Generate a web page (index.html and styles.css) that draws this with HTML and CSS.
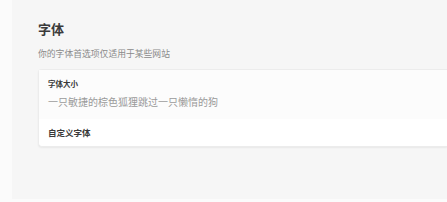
FILE: index.html
```html
<!DOCTYPE html>
<html lang="zh-CN">
<head>
    <meta charset="UTF-8">
    <title>字体</title>
    <link rel="stylesheet" href="styles.css">
</head>
<body>
    <div class="panel">
        <h2 class="section-title">字体</h2>
        <p class="section-desc">你的字体首选项仅适用于某些网站</p>

        <div class="card">
            <div class="row row-hover">
                <div class="row-label">字体大小</div>
                <div class="row-sample">一只敏捷的棕色狐狸跳过一只懒惰的狗</div>
            </div>
            <div class="row">
                <div class="row-label row-label-wide">自定义字体</div>
            </div>
        </div>
    </div>
</body>
</html>
```
FILE: styles.css
```css
* {
    margin: 0;
    padding: 0;
    box-sizing: border-box;
}

body {
    font-family: "Noto Sans CJK SC", "Noto Sans", sans-serif;
    background: #fbfbfb;
    color: #333;
    overflow: hidden;
}

.panel {
    margin-left: 12px;
    height: 199px;
    background: #f6f6f6;
    padding: 20px 0 0 26px;
}

.section-title {
    font-size: 13px;
    line-height: 17px;
    font-weight: 700;
    color: #3a3a3a;
}

.section-desc {
    margin-top: 11px;
    font-size: 8.8px;
    line-height: 11px;
    color: #8a8a8a;
}

.card {
    margin-top: 10px;
    background: #fff;
    border: 1px solid #ececec;
    border-right: none;
    border-radius: 4px 0 0 4px;
    box-shadow: 0 1px 2px rgba(0, 0, 0, 0.06);
}

.row {
    padding: 8px 9px 9px;
}

.row-hover {
    background: #fcfcfc;
    padding: 9px 9px 11px;
}

.row-label {
    font-size: 7.5px;
    line-height: 10px;
    font-weight: 700;
    color: #3a3a3a;
}

.row-label-wide {
    font-size: 8.5px;
}

.row-sample {
    margin-top: 6px;
    font-size: 10px;
    line-height: 13px;
    color: #9a9a9a;
}
```
